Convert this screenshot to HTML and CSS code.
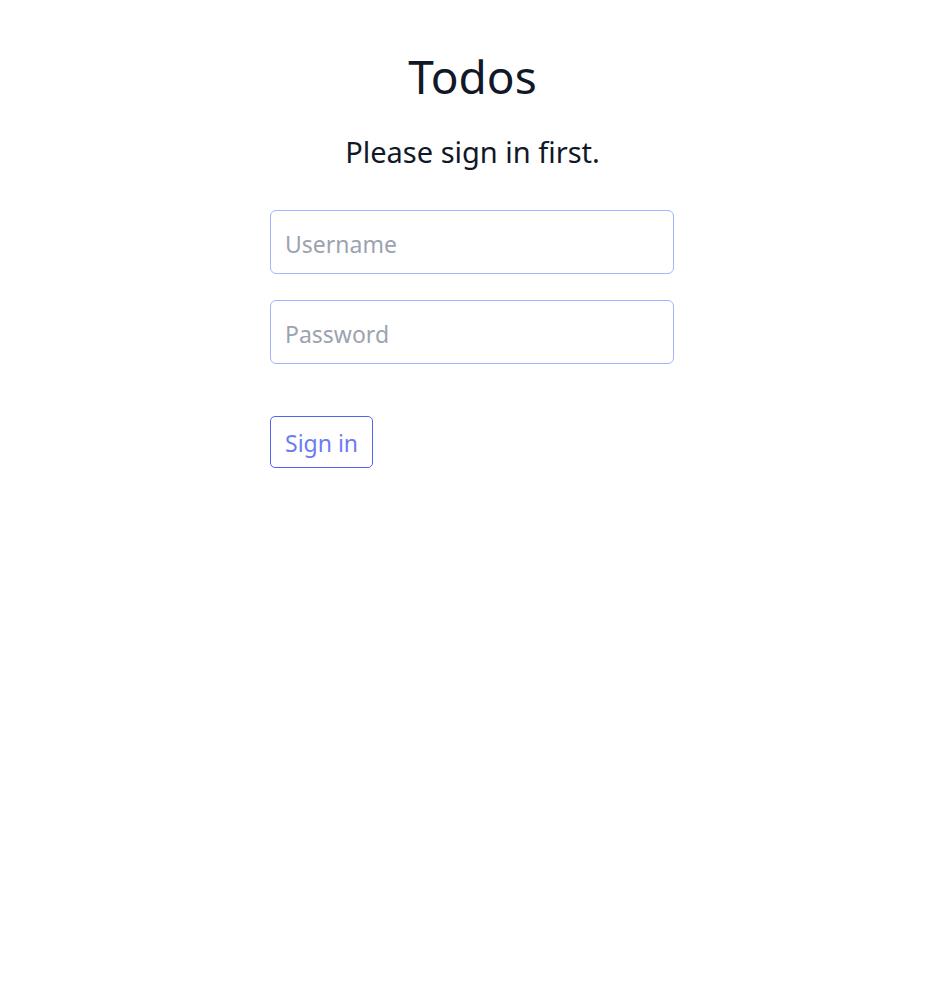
FILE: index.html
```html
<!DOCTYPE html>
<html lang="en">
<head>
<meta charset="utf-8">
<title>Todos</title>
<link rel="stylesheet" href="styles.css">
</head>
<body>
<main class="page">
  <h1 class="title">Todos</h1>
  <p class="subtitle">Please sign in first.</p>
  <form class="form">
    <input class="field" type="text" placeholder="Username">
    <input class="field" type="password" placeholder="Password">
    <div class="actions">
      <button class="btn" type="button">Sign in</button>
    </div>
  </form>
</main>
</body>
</html>
```

FILE: styles.css
```css
html, body {
  margin: 0;
  padding: 0;
  background: #ffffff;
}
body {
  font-family: "Noto Sans", "Open Sans", sans-serif;
  color: #111827;
}
.page {
  width: 405px;
  margin: 0 auto;
  padding-top: 48px;
  display: flex;
  flex-direction: column;
}
.title {
  margin: 0;
  font-size: 46px;
  font-weight: 400;
  line-height: 56px;
  text-align: center;
}
.subtitle {
  margin: 28px 0 0;
  font-size: 29px;
  line-height: 40px;
  text-align: center;
}
.form {
  margin-top: 38px;
  padding-right: 1px;
  display: flex;
  flex-direction: column;
  gap: 26px;
}
.field {
  box-sizing: border-box;
  width: 100%;
  height: 64px;
  padding: 3px 14px 0;
  border: 1px solid #a5b4fc;
  border-radius: 6px;
  font-family: inherit;
  font-size: 23px;
  color: #111827;
  outline: none;
}
.field::placeholder {
  color: #9ca3af;
}
.actions {
  margin-top: 26px;
}
.btn {
  box-sizing: border-box;
  height: 52px;
  padding: 1px 14px 0;
  border: 1px solid #5064ec;
  border-radius: 5px;
  background: #ffffff;
  color: #6b7cf3;
  font-family: inherit;
  font-size: 23px;
  cursor: pointer;
}
```
